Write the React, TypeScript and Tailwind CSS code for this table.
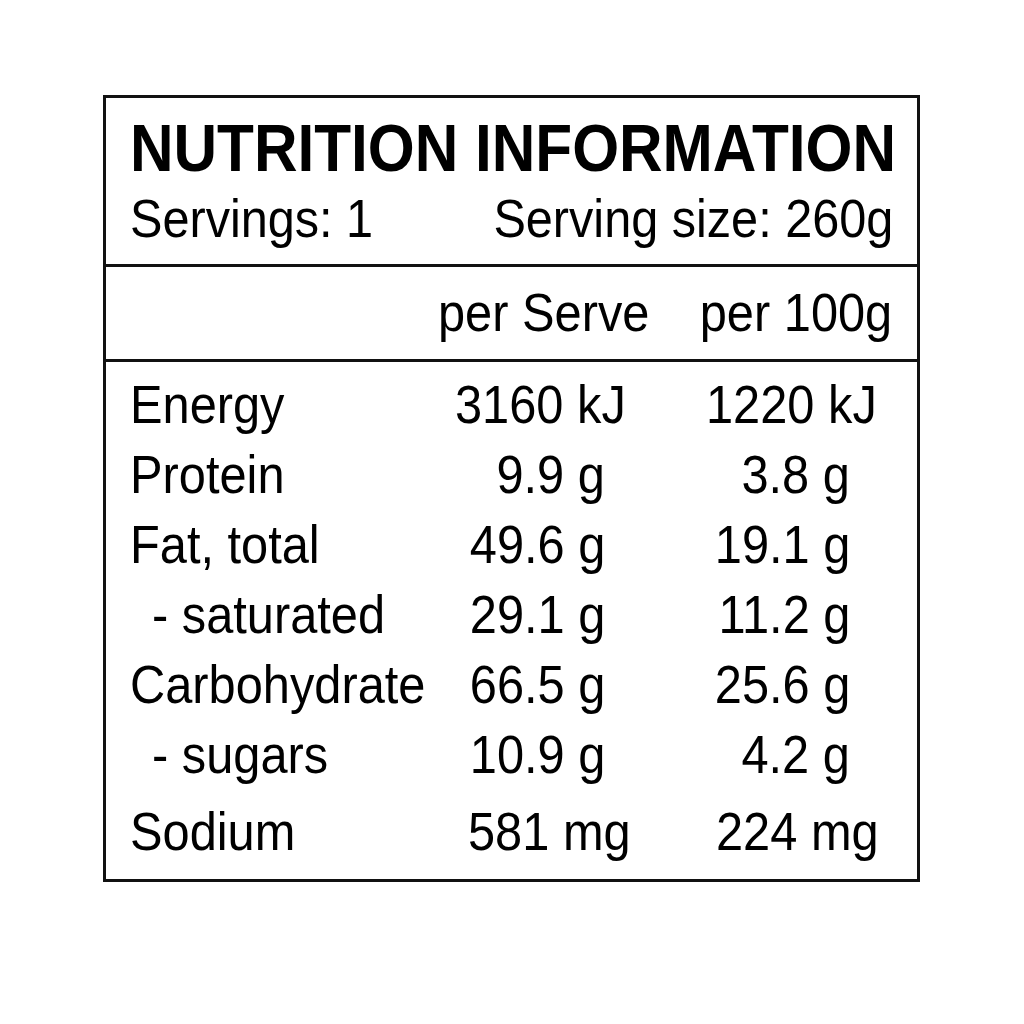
type Kind = "g" | "kj" | "mg";

const rows: { label: string; serve: string; per100: string; kind: Kind; indent?: boolean }[] = [
  { label: "Energy", serve: "3160 kJ", per100: "1220 kJ", kind: "kj" },
  { label: "Protein", serve: "9.9 g", per100: "3.8 g", kind: "g" },
  { label: "Fat, total", serve: "49.6 g", per100: "19.1 g", kind: "g" },
  { label: "- saturated", serve: "29.1 g", per100: "11.2 g", kind: "g", indent: true },
  { label: "Carbohydrate", serve: "66.5 g", per100: "25.6 g", kind: "g" },
  { label: "- sugars", serve: "10.9 g", per100: "4.2 g", kind: "g", indent: true },
  { label: "Sodium", serve: "581 mg", per100: "224 mg", kind: "mg" },
];

// where each value sits inside its column
const serveCell: Record<Kind, string> = {
  g: "justify-end pr-[55px]",
  kj: "justify-start pl-[15px]",
  mg: "justify-start pl-[28px]",
};
const per100Cell: Record<Kind, string> = {
  g: "justify-end pr-[43px]",
  kj: "justify-start pl-[46px]",
  mg: "justify-start pl-[56px]",
};
const spanOrigin: Record<Kind, string> = {
  g: "origin-right",
  kj: "origin-left",
  mg: "origin-left",
};

const App = () => {
  return (
    <section className="min-h-screen bg-white pt-[95px] pl-[103px] font-['Liberation_Sans',Arial,sans-serif] text-black">
      <main className="w-[817px] h-[787px] border-[3px] border-[#111] flex flex-col">
        <div className="h-[169px] border-b-[3px] border-[#111] px-[24px] pt-[16px] flex flex-col gap-[10px]">
          <h1 className="text-[67px] leading-[67px] font-bold whitespace-nowrap">
            <span className="inline-block origin-left scale-x-[0.9]">NUTRITION INFORMATION</span>
          </h1>
          <div className="flex justify-between text-[54px] leading-[54px] whitespace-nowrap">
            <span className="inline-block origin-left scale-x-[0.9]">Servings: 1</span>
            <span className="inline-block origin-right scale-x-[0.9]">Serving size: 260g</span>
          </div>
        </div>

        <div className="h-[95px] border-b-[3px] border-[#111] pl-[24px] pr-[24px] pt-[19px] grid grid-cols-[310px_220px_1fr] text-[53px] leading-[53px] whitespace-nowrap">
          <div />
          <div className="flex justify-start -ml-[2px]">
            <span className="inline-block origin-left scale-x-[0.92]">per Serve</span>
          </div>
          <div className="flex justify-end pr-[1px]">
            <span className="inline-block origin-right scale-x-[0.92]">per 100g</span>
          </div>
        </div>

        <div className="flex-1 pl-[24px] pr-[24px] pt-[8px] flex flex-col text-[53px] leading-[70px] whitespace-nowrap">
          {rows.map((row) => (
            <div
              key={row.label}
              className={
                row.kind === "mg"
                  ? "grid grid-cols-[310px_220px_1fr] mt-[7px]"
                  : "grid grid-cols-[310px_220px_1fr]"
              }
            >
              <div className={row.indent ? "flex pl-[22px]" : "flex"}>
                <span className="inline-block origin-left scale-x-[0.92]">{row.label}</span>
              </div>
              <div className={`flex ${serveCell[row.kind]}`}>
                <span className={`inline-block ${spanOrigin[row.kind]} scale-x-[0.92]`}>{row.serve}</span>
              </div>
              <div className={`flex ${per100Cell[row.kind]}`}>
                <span className={`inline-block ${spanOrigin[row.kind]} scale-x-[0.92]`}>{row.per100}</span>
              </div>
            </div>
          ))}
        </div>
      </main>
    </section>
  );
};

export default App;
